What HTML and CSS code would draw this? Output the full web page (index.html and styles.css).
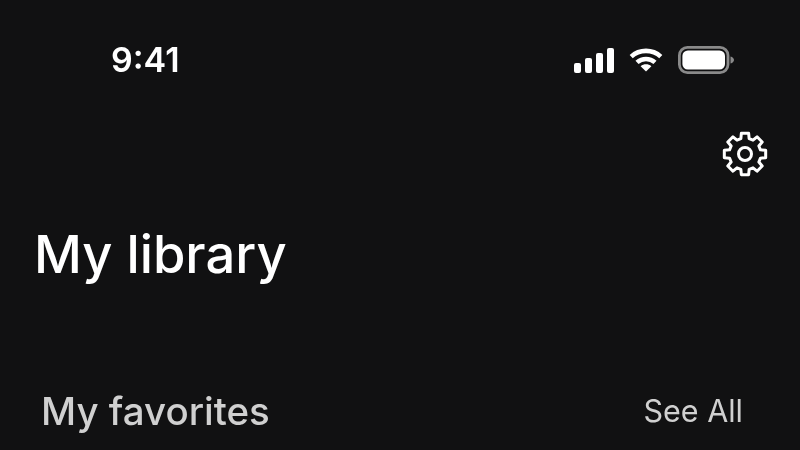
FILE: index.html
```html
<!DOCTYPE html>
<html lang="en">
<head>
    <meta charset="UTF-8">
    <meta name="viewport" content="width=device-width, initial-scale=1.0">
    <title>My library</title>
    <link rel="stylesheet" href="styles.css">
</head>
<body>

<div class="screen">
    <div class="status-bar">
        <span class="time">9:41</span>
        <div class="status-icons">
            <svg class="signal" width="40" height="26" viewBox="0 0 40 26" fill="#fff">
                <rect x="0" y="16" width="7" height="10" rx="2"/>
                <rect x="11" y="11" width="7" height="15" rx="2"/>
                <rect x="22" y="6" width="7" height="20" rx="2"/>
                <rect x="33" y="1" width="7" height="25" rx="2"/>
            </svg>
            <svg class="wifi" width="34" height="24" viewBox="0 0 34 24" fill="none" stroke="#fff" stroke-width="4.6">
                <path d="M2.2 8.6C10.6 1 23.4 1 31.8 8.6"/>
                <path d="M8 14.4C13.2 9.8 20.8 9.8 26 14.4"/>
                <path d="M17 23.6L11.6 18.2C14.8 15.6 19.2 15.6 22.4 18.2Z" fill="#fff" stroke="none"/>
            </svg>
            <svg class="battery" width="57" height="28" viewBox="0 0 57 28">
                <rect x="1.4" y="1.4" width="48.6" height="25.2" rx="8" fill="none" stroke="#8a8a8a" stroke-width="2.8"/>
                <rect x="4.4" y="4.4" width="42.6" height="19.2" rx="5.5" fill="#fff"/>
                <path d="M52.500 10.500C54.800 11.200 56 12.400 56 14C56 15.600 54.800 16.800 52.500 17.500Z" fill="#8a8a8a"/>
            </svg>
        </div>
    </div>

    <div class="toolbar">
        <svg class="gear" width="48" height="48" viewBox="0 0 48 48" fill="none" stroke="#fff" stroke-width="3" stroke-linejoin="round">
            <polygon points="19.86,8.55 20.35,3.32 27.65,3.32 28.14,8.55 32,10.15 36.04,6.8 41.2,11.96 37.85,16 39.45,19.86 44.68,20.35 44.68,27.65 39.45,28.14 37.85,32 41.2,36.04 36.04,41.2 32,37.85 28.14,39.45 27.65,44.68 20.35,44.68 19.86,39.45 16,37.85 11.96,41.2 6.8,36.04 10.15,32 8.55,28.14 3.32,27.65 3.32,20.35 8.55,19.86 10.15,16 6.8,11.96 11.96,6.8 16,10.15"/>
            <circle cx="24" cy="24" r="6.5"/>
        </svg>
    </div>

    <h1 class="page-title">My library</h1>

    <div class="section-head">
        <h2 class="section-title">My favorites</h2>
        <a class="see-all">See All</a>
    </div>
</div>

</body>
</html>
```

FILE: styles.css
```css
html, body {
    margin: 0;
    height: 100%;
    overflow: hidden;
}
body {
    background-color: #111112;
    color: #fff;
    font-family: Inter, "Liberation Sans", sans-serif;
}
.screen {
    display: flex;
    flex-direction: column;
    height: 450px;
    will-change: opacity;
}
.status-bar {
    display: flex;
    justify-content: space-between;
    align-items: center;
    height: 40px;
    padding: 40px 65px 0 111px;
}
.time {
    font-size: 34px;
    font-weight: 600;
    line-height: 40px;
}
.status-icons {
    display: flex;
    align-items: center;
    gap: 15px;
}
.status-icons svg {
    display: block;
}
.toolbar {
    display: flex;
    justify-content: flex-end;
    padding: 50px 31px 0 0;
}
.gear {
    display: block;
}
.page-title {
    margin: 46px 0 0;
    padding-left: 34px;
    font-size: 52.5px;
    font-weight: 450;
    line-height: 60px;
}
.section-head {
    display: flex;
    justify-content: space-between;
    align-items: center;
    margin-top: 105px;
    padding: 0 57px 0 41px;
    color: #d0d0d0;
}
.section-title {
    margin: 0;
    font-size: 38.5px;
    font-weight: 450;
    line-height: 44px;
}
.see-all {
    font-size: 30.5px;
    line-height: 44px;
}
```
